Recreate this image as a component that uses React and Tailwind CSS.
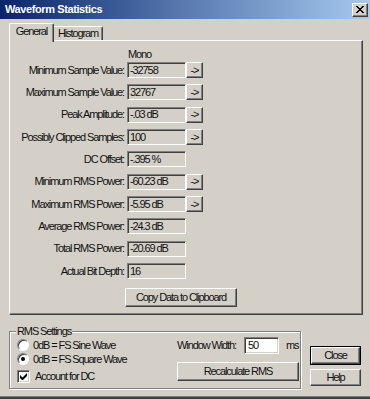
import React from "react";

const sunken =
  "border border-t-[#808080] border-l-[#808080] border-b-white border-r-white shadow-[inset_1px_1px_0_#404040,inset_-1px_-1px_0_#d4d0c8]";
const raised =
  "border border-t-white border-l-white border-b-[#404040] border-r-[#404040] shadow-[inset_-1px_-1px_0_#808080,inset_1px_1px_0_#d4d0c8]";

const rows = [
  { label: "Minimum Sample Value:", value: "-32758", arrow: true },
  { label: "Maximum Sample Value:", value: "32767", arrow: true },
  { label: "Peak Amplitude:", value: "-.03 dB", arrow: true },
  { label: "Possibly Clipped Samples:", value: "100", arrow: true },
  { label: "DC Offset:", value: "-.395 %" },
  { label: "Minimum RMS Power:", value: "-60.23 dB", arrow: true },
  { label: "Maximum RMS Power:", value: "-5.95 dB", arrow: true },
  { label: "Average RMS Power:", value: "-24.3 dB" },
  { label: "Total RMS Power:", value: "-20.69 dB" },
  { label: "Actual Bit Depth:", value: "16" },
];

const StatRow = ({ label, value, arrow }) => (
  <div className="flex items-center h-[16px]">
    <div className="w-[117px] pr-[3px] text-right whitespace-nowrap">{label}</div>
    <div className={`w-[59px] h-[16px] pl-[2px] flex items-center ${sunken}`}>{value}</div>
    {arrow && (
      <button type="button" className={`w-[17px] h-[16px] flex items-center justify-center bg-[#d4d0c8] ${raised}`}>
        -&gt;
      </button>
    )}
  </div>
);

const Radio = ({ checked, children }) => (
  <div className="flex items-center h-[14px] gap-[4px]">
    <span className="w-[12px] h-[12px] rounded-full bg-white border border-t-[#808080] border-l-[#808080] border-b-white border-r-white flex items-center justify-center shadow-[inset_1px_1px_0_#404040]">
      {checked && <span className="w-[4px] h-[4px] rounded-full bg-black" />}
    </span>
    <span>{children}</span>
  </div>
);

export default function App() {
  return (
    <div className="w-[370px] h-[399px] bg-[#d4d0c8] flex flex-col overflow-hidden text-[#111] text-[11px] tracking-[-1.1px] font-['Liberation_Sans',Arial,sans-serif]">
      <div className="h-[19px] shrink-0 bg-linear-to-r from-[#0a246a] via-[#5a7ab0] to-[#a6caf0] flex items-center justify-between pl-[5px] pr-[2px]">
        <span className="text-white font-bold tracking-[-0.4px]">Waveform Statistics</span>
        <button type="button" className={`w-[16px] h-[14px] bg-[#d4d0c8] flex items-center justify-center ${raised}`}>
          <svg width="8" height="7" viewBox="0 0 8 7">
            <path d="M0 0h2v1h1v1h2V1h1V0h2v1H7v1H6v1H5v1h1v1h1v1h1v1H6V6H5V5H3v1H2v1H0V6h1V5h1V4h1V3H2V2H1V1H0z" fill="#000" />
          </svg>
        </button>
      </div>

      <div className="flex-1 flex flex-col px-[9px]">
        <div className="mt-[4px] h-[17px] flex items-end">
          <div className="relative z-10 w-[45px] h-[19px] -mb-[2px] bg-[#d4d0c8] border-l border-t border-r border-l-white border-t-white border-r-[#404040] rounded-t-[2px] shadow-[inset_-1px_0_0_#808080] flex items-center justify-center pb-[3px]">
            General
          </div>
          <div className="w-[49px] h-[14px] bg-[#d4d0c8] border-t border-r border-t-white border-r-[#404040] rounded-tr-[2px] shadow-[inset_-1px_0_0_#808080] flex items-center justify-center">
            Histogram
          </div>
        </div>

        <div className={`w-[354px] h-[275px] flex flex-col ${raised}`}>
          <div className="pt-[6px] h-[20px] leading-[14px] pl-[118px]">Mono</div>
          <div className="mt-[1px] flex flex-col gap-[6.33px]">
            {rows.map((r) => (
              <StatRow key={r.label} {...r} />
            ))}
          </div>
          <button type="button" className={`mt-[9px] ml-[115px] w-[112px] h-[19px] bg-[#d4d0c8] flex items-center justify-center ${raised}`}>
            Copy Data to Clipboard
          </button>
        </div>

        <div className="flex mt-[16px]">
          <div className="relative w-[294px] h-[58px] border border-[#808080] shadow-[inset_1px_1px_0_white,1px_1px_0_white] flex">
            <span className="absolute -top-[8px] left-[6px] px-[1px] bg-[#d4d0c8] leading-[14px]">RMS Settings</span>
            <div className="w-[167px] pl-[7px] pt-[6px] flex flex-col">
              <Radio>0dB = FS Sine Wave</Radio>
              <Radio checked>0dB = FS Square Wave</Radio>
              <div className="mt-[3px] flex items-center h-[14px] gap-[5px]">
                <span className={`w-[13px] h-[13px] bg-white flex items-center justify-center ${sunken}`}>
                  <svg width="7" height="7" viewBox="0 0 7 7">
                    <path d="M0 2v3l2 2h1l4-4V0L2.5 4.5z" fill="#000" />
                  </svg>
                </span>
                <span>Account for DC</span>
              </div>
            </div>
            <div className="w-[122px] pt-[5px] flex flex-col">
              <div className="flex items-center h-[17px]">
                <span className="w-[67px] whitespace-nowrap">Window Width:</span>
                <div className={`w-[35px] h-[17px] bg-white pl-[3px] flex items-center ${sunken}`}>50</div>
                <span className="ml-[7px]">ms</span>
              </div>
              <button type="button" className={`mt-[8px] w-[122px] h-[19px] bg-[#d4d0c8] flex items-center justify-center ${raised}`}>
                Recalculate RMS
              </button>
            </div>
          </div>

          <div className="ml-[9px] pt-[15px] flex flex-col gap-[4px]">
            <div className="border border-black">
              <button type="button" className={`w-[49px] h-[17px] bg-[#d4d0c8] flex items-center justify-center ${raised}`}>
                Close
              </button>
            </div>
            <button type="button" className={`w-[51px] h-[17px] bg-[#d4d0c8] flex items-center justify-center ${raised}`}>
              Help
            </button>
          </div>
        </div>
      </div>
      <div className="h-[1px] bg-[#808080]" />
      <div className="h-[2px] bg-[#404040]" />
    </div>
  );
}
